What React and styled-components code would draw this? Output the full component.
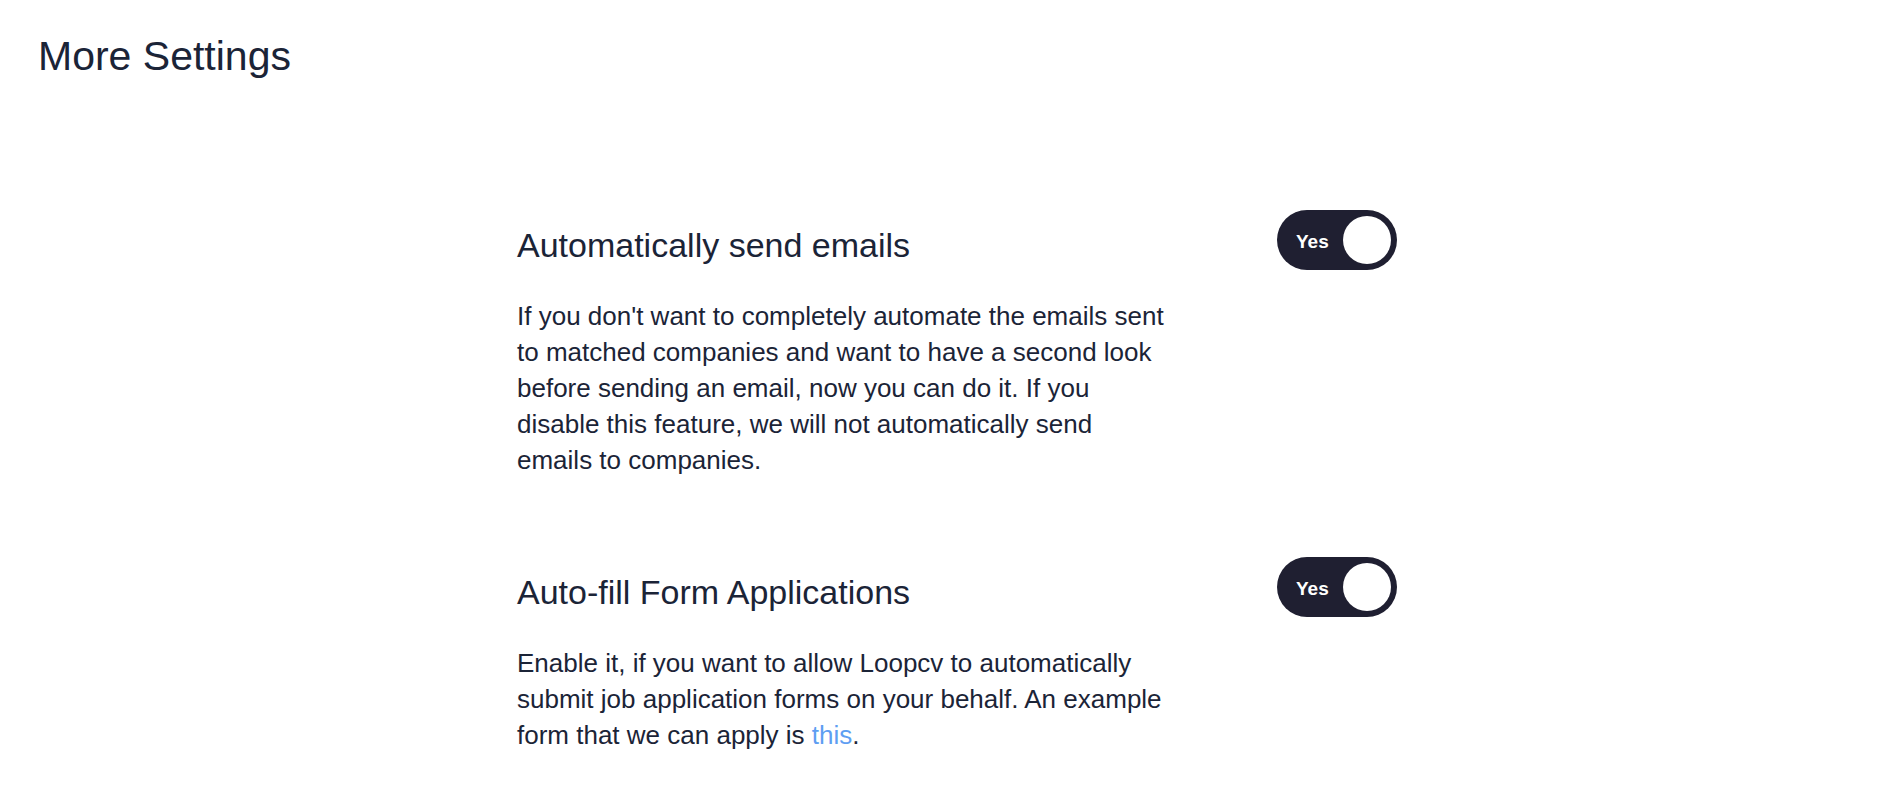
import React from 'react'
import styled, { createGlobalStyle } from 'styled-components'

const GlobalStyle = createGlobalStyle`
    body {
        margin: 0;
        background: #FFFFFF;
        font-family: 'Liberation Sans', Helvetica, Arial, sans-serif;
        color: #1B2437;
    }
`

const settings = [
    {
        title: 'Automatically send emails',
        text: "If you don't want to completely automate the emails sent to matched companies and want to have a second look before sending an email, now you can do it. If you disable this feature, we will not automatically send emails to companies.",
        on: true,
    },
    {
        title: 'Auto-fill Form Applications',
        text: 'Enable it, if you want to allow Loopcv to automatically submit job application forms on your behalf. An example form that we can apply is ',
        link: 'this',
        on: true,
    },
]

const MoreSettings = () => {
  return (
    <>
        <GlobalStyle />
        <MainDiv>
            <PageTitle>More Settings</PageTitle>
            <SettingsList>
                {settings.map((s) => (
                    <SettingRow key={s.title}>
                        <TextCol>
                            <SettingTitle>{s.title}</SettingTitle>
                            <SettingText>
                                {s.text}
                                {s.link && <><TextLink href='#'>{s.link}</TextLink>.</>}
                            </SettingText>
                        </TextCol>
                        <Toggle $on={s.on}>
                            <ToggleLabel>{s.on ? 'Yes' : 'No'}</ToggleLabel>
                            <Knob />
                        </Toggle>
                    </SettingRow>
                ))}
            </SettingsList>
        </MainDiv>
    </>
  )
}

const MainDiv = styled.div`
    padding: 32px 38px 40px;
`

const PageTitle = styled.h1`
    margin: 0;
    font-size: 41px;
    font-weight: 400;
    line-height: 48px;
    color: #1B2437;
`

const SettingsList = styled.div`
    display: flex;
    flex-direction: column;
    gap: 79px;
    margin-top: 130px;
    padding-left: 479px;
`

const SettingRow = styled.div`
    display: flex;
    align-items: flex-start;
    width: 880px;
    justify-content: space-between;
`

const TextCol = styled.div`
    width: 648px;
    padding-top: 15px;
`

const SettingTitle = styled.h3`
    margin: 0;
    font-size: 34px;
    font-weight: 400;
    line-height: 40px;
    color: #1B2437;
`

const SettingText = styled.p`
    margin: 33px 0 0;
    font-size: 26px;
    line-height: 36px;
    color: #1B2437;
`

const TextLink = styled.a`
    color: #5E9EF2;
    text-decoration: none;
`

const Toggle = styled.div`
    width: 120px;
    height: 60px;
    box-sizing: border-box;
    border-radius: 30px;
    background: ${(p) => (p.$on ? '#1F1F31' : '#C9CCD4')};
    display: flex;
    align-items: center;
    justify-content: space-between;
    padding: 0 6px 0 19px;
    flex-shrink: 0;
    cursor: pointer;
`

const ToggleLabel = styled.span`
    font-size: 19px;
    font-weight: 700;
    line-height: 1;
    padding-top: 2px;
    color: #FFFFFF;
`

const Knob = styled.span`
    width: 48px;
    height: 48px;
    border-radius: 50%;
    background: #FFFFFF;
`

export default MoreSettings
